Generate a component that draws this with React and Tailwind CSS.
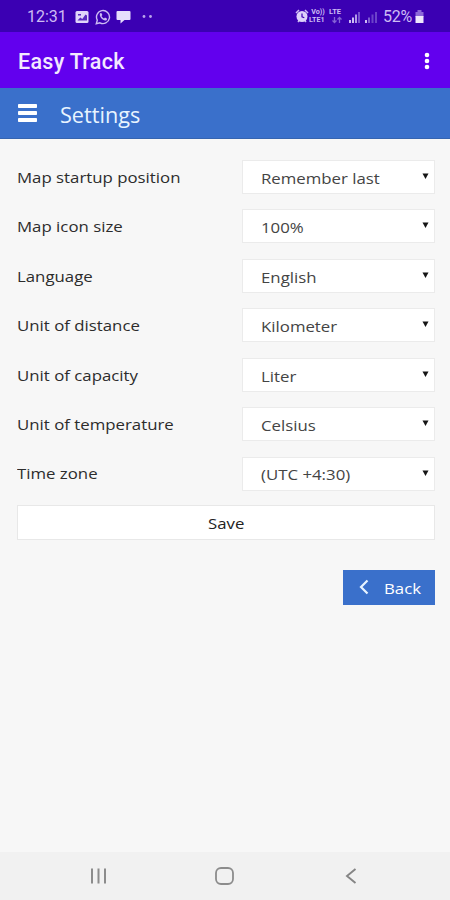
const settings = [
  { label: "Map startup position", value: "Remember last" },
  { label: "Map icon size", value: "100%" },
  { label: "Language", value: "English" },
  { label: "Unit of distance", value: "Kilometer" },
  { label: "Unit of capacity", value: "Liter" },
  { label: "Unit of temperature", value: "Celsius" },
  { label: "Time zone", value: "(UTC +4:30)" },
];

function StatusBar() {
  return (
    <div className="flex h-8 shrink-0 items-center bg-[#3b00b3] pl-[27px] pr-[25px] font-['Roboto',sans-serif] text-[#cdbcf3]">
      <span className="w-12 whitespace-nowrap pt-px text-[16px] leading-8">12:31</span>
      <svg className="mt-px" width="14" height="14" viewBox="0 0 14 14">
        <rect x="0.5" y="1" width="13" height="12" rx="1.5" fill="#e0d5fa" />
        <path d="M3 4h3v1.5H3zM2.5 10.5l2.8-3 2 1.5 3.2-4.5 1.5 1v5z" fill="#5a2ac0" />
      </svg>
      <svg className="ml-[6px] mt-px" width="16" height="16" viewBox="0 0 16 16" fill="none" stroke="#cdbcf3">
        <path d="M1.3 14.7l1-3.5A6.5 6.5 0 1 1 4.9 13.8z" strokeWidth="1.4" />
        <path d="M5.1 4.2l1.2-.3 1.1 2.2-.9 1c.6 1.2 1.3 1.8 2.5 2.4l1-.9 2.1 1.1-.4 1.2c-2.3 2.2-8.4-3.2-6.6-6.7z" fill="#cdbcf3" stroke="none" />
      </svg>
      <svg className="ml-[5px] mt-[2px]" width="15" height="14" viewBox="0 0 15 14">
        <path d="M1.5 1h12q1 0 1 1v7q0 1-1 1H8.5L4.5 13.5V10h-3q-1 0-1-1V2q0-1 1-1z" fill="#e6ddfc" />
      </svg>
      <svg className="ml-[11px] mt-px" width="12" height="4" viewBox="0 0 12 4" fill="#b9a3eb">
        <circle cx="2" cy="1.5" r="1.4" />
        <circle cx="8.5" cy="1.5" r="1.4" />
      </svg>
      <div className="ml-auto flex items-center">
        <svg className="shrink-0" width="14" height="14" viewBox="0 0 14 14">
          <path d="M1 4l3-3M13 4l-3-3M3 13l1.5-2M11 13l-1.5-2" stroke="#cdbcf3" strokeWidth="1.5" />
          <circle cx="7" cy="7.5" r="5.5" fill="#ddd1fa" />
          <path d="M7 4.5v3.3l2.3 1" fill="none" stroke="#3b00b3" strokeWidth="1.2" />
        </svg>
        <div className="flex w-[18px] flex-col text-[6.5px] font-bold leading-[8px]">
          <span className="origin-left scale-x-110 pl-[2px]">Vo))</span>
          <span className="origin-left scale-x-110">LTE1</span>
        </div>
        <div className="ml-[2px] flex w-[15px] flex-col text-[6.5px] font-bold leading-[8px]">
          <span className="origin-left scale-x-[1.15]">LTE</span>
          <svg className="ml-[3px]" width="10" height="8" viewBox="0 0 10 8" fill="none" stroke="#8663d6" strokeWidth="1.3">
            <path d="M2.5 1v5.500M0.500 4.500l2 2 2-2M7.500 7V1.500M5.500 3.500l2-2 2 2" />
          </svg>
        </div>
        <svg className="ml-[4px] mt-px shrink-0" width="30" height="14" viewBox="0 0 30 14">
          <path d="M1 10h2v3H1zM4 7.5h2V13H4z" fill="#cdbcf3" />
          <path d="M7 4.5h2V13H7z" fill="#b39be8" />
          <path d="M10 2h2v11h-2z" fill="#7650cf" />
          <path d="M17 10h2v3h-2z" fill="#cdbcf3" />
          <path d="M20 7.5h2V13h-2z" fill="#7f5bd2" />
          <path d="M23.5 4.5h2V13h-2zM27 2h2v11h-2z" fill="#6c43c9" />
        </svg>
        <span className="ml-[5px] w-[31px] whitespace-nowrap pt-px text-[16px] leading-8 tracking-[-0.3px]">52%</span>
        <svg className="mt-px shrink-0" width="11" height="14" viewBox="0 0 11 14">
          <path d="M3.5 0h4v2h2v5h-8V2h2z" fill="#8b68d8" />
          <path d="M1.5 6h8v7h-8z" fill="#eee8fc" />
        </svg>
      </div>
    </div>
  );
}

function SettingRow({ label, value }) {
  return (
    <div className="flex h-[34px] items-center">
      <span className="w-[225px] shrink-0 whitespace-nowrap text-[15px] text-[#2c2c2c]">
        <span className="inline-block origin-left scale-x-[1.12]">{label}</span>
      </span>
      <button className="flex h-[34px] flex-1 items-center justify-between border border-[#ebebeb] bg-white pl-[18px] pr-[5px] text-[15px] text-[#444]">
        <span className="origin-left scale-x-[1.12] pt-[2px]">{value}</span>
        <svg className="mb-px" width="7" height="7" viewBox="0 0 7 7">
          <path d="M0.5 0.5h6L3.5 6z" fill="#151515" />
        </svg>
      </button>
    </div>
  );
}

export default function App() {
  return (
    <div className="flex h-[900px] w-[450px] flex-col overflow-hidden bg-[#f7f7f7] font-['Open_Sans',sans-serif]">
      <StatusBar />
      <header className="flex h-14 shrink-0 items-center justify-between bg-[#6200ee] pl-[18px] pr-[20px] pt-[2px]">
        <h1 className="pt-[2px] font-['Roboto',sans-serif] text-[21.5px] font-medium tracking-[0.3px] text-[#f3e9ff]">Easy Track</h1>
        <svg width="6" height="18" viewBox="0 0 6 18" fill="#fff">
          <circle cx="3" cy="3" r="2.3" />
          <circle cx="3" cy="9" r="2.3" />
          <circle cx="3" cy="15" r="2.3" />
        </svg>
      </header>
      <div className="flex h-[51px] shrink-0 items-center border-b border-[#3564b0] bg-[#3a70cb] pl-[18px]">
        <svg className="mb-px" width="19" height="18" viewBox="0 0 19 18" fill="#fff">
          <rect y="0" width="19" height="4" rx="0.8" />
          <rect y="7" width="19" height="4" rx="0.8" />
          <rect y="14" width="19" height="4" rx="0.8" />
        </svg>
        <h2 className="ml-[23px] origin-left scale-x-[1.03] pt-[5px] text-[21px] text-[#e8f4ff]">Settings</h2>
      </div>
      <main className="flex flex-1 flex-col pl-[17px] pr-[15px] pt-[21px]">
        <div className="flex flex-col gap-[15.45px]">
          {settings.map((item) => (
            <SettingRow key={item.label} label={item.label} value={item.value} />
          ))}
        </div>
        <button className="mt-[14.3px] flex h-[35px] items-center justify-center border border-[#e8e8e8] bg-white pt-[2px] text-[15px] text-[#222]">
          <span className="scale-x-[1.12]">Save</span>
        </button>
        <button className="mt-[30px] flex h-[35px] w-[92px] items-center self-end bg-[#3a70cb] pl-[16px] text-[15px] text-white">
          <svg width="10" height="16" viewBox="0 0 10 16" fill="none">
            <path d="M8.5 1.5L2 8l6.5 6.5" stroke="#e8f4ff" strokeWidth="2.2" />
          </svg>
          <span className="ml-[15px] origin-left scale-x-[1.12] pt-[2px]">Back</span>
        </button>
      </main>
      <nav className="flex h-12 shrink-0 items-center justify-between bg-[#f1f1f1] pl-[90px] pr-[93px]">
        <svg width="17" height="16" viewBox="0 0 17 16" stroke="#8c8c8c" strokeWidth="2">
          <path d="M2 0.500v15M8.500 0.500v15M15 0.500v15" />
        </svg>
        <svg className="-ml-[4px]" width="19" height="18" viewBox="0 0 19 18" fill="none">
          <rect x="1" y="1" width="17" height="16" rx="5" stroke="#8c8c8c" strokeWidth="1.8" />
        </svg>
        <svg width="12" height="16" viewBox="0 0 12 16" fill="none">
          <path d="M10.5 1L2 8l8.5 7" stroke="#858585" strokeWidth="1.9" />
        </svg>
      </nav>
    </div>
  );
}
